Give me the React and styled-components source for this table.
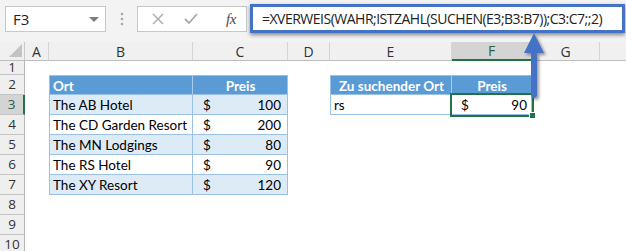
import React from 'react';
import styled, { createGlobalStyle, css } from 'styled-components';

const GlobalStyle = createGlobalStyle`
  html, body { margin: 0; padding: 0; background: #fff; overflow: hidden; }
  #root { width: 626px; height: 251px; }
`;

const BLUE_HEAD = '#5b9bd5';
const BLUE_BAND = '#ddebf7';
const BLUE_LINE = '#9bc2e6';
const GREEN = '#217346';

const Window = styled.div`
  position: relative;
  width: 626px;
  height: 251px;
  overflow: hidden;
  background: #fff;
`;

/* ---------- formula bar ---------- */
const FormulaBar = styled.div`
  display: flex;
  align-items: flex-start;
  height: 42px;
  box-sizing: border-box;
  padding: 6px 0 0 5px;
  background: #f3f3f3;
`;

const NameBox = styled.div`
  box-sizing: border-box;
  width: 101px;
  height: 26px;
  background: #fff;
  border: 1px solid #c8c8c8;
  display: flex;
  align-items: center;
  justify-content: space-between;
  padding: 0 6px 0 7px;
  font: 15px "Open Sans", "Liberation Sans", sans-serif;
  color: #222;
`;

const Caret = styled.span`
  width: 0;
  height: 0;
  border-left: 5px solid transparent;
  border-right: 5px solid transparent;
  border-top: 5px solid #7d7d7d;
`;

const Grip = styled.div`
  width: 31px;
  height: 26px;
  display: flex;
  align-items: center;
  justify-content: center;
`;

const FnBox = styled.div`
  box-sizing: border-box;
  width: 110px;
  height: 26px;
  background: #fff;
  border: 1px solid #c8c8c8;
  display: flex;
  align-items: center;
  padding-left: 14px;
  gap: 20px;
`;

const FxLabel = styled.span`
  font: italic 15px "Liberation Serif", serif;
  color: #4a4a4a;
  margin-left: 8px;
  letter-spacing: -0.5px;
`;

const FormulaInput = styled.div`
  box-sizing: border-box;
  margin: -2px 0 0 3px;
  width: 375px;
  height: 29px;
  background: #fff;
  border: 3px solid #4472c4;
  box-shadow: 0 2px 4px rgba(0, 0, 0, 0.45);
  display: flex;
  align-items: center;
  padding-left: 9px;
  font: 14px "Open Sans", "Liberation Sans", sans-serif;
  letter-spacing: -0.5px;
  color: #222;
  white-space: nowrap;
  overflow: hidden;
`;

/* ---------- sheet grid ---------- */
const Sheet = styled.div`
  display: grid;
  grid-template-columns: 25px 24px 144px 95px 42px 122px 80px 68px 80px;
  grid-template-rows: 19px 14px repeat(9, 20px);
  width: 680px;
  font-family: "Lato", "Open Sans", sans-serif;
`;

const Corner = styled.div`
  background: #f0f0f0;
  border-right: 1px solid #c8c8c8;
  border-bottom: 1px solid #bdbdbd;
  display: flex;
  align-items: flex-end;
  justify-content: flex-end;
  padding: 0 2px 3px 0;
  box-sizing: border-box;
  &::after {
    content: '';
    width: 0;
    height: 0;
    border-left: 13px solid transparent;
    border-bottom: 13px solid #c3c3c3;
  }
`;

const ColHead = styled.div`
  box-sizing: border-box;
  background: ${(p) => (p.$selected ? '#d4d4d4' : '#f0f0f0')};
  border-right: 1px solid #d4d4d4;
  border-bottom: ${(p) => (p.$selected ? `2px solid ${GREEN}` : '1px solid #bdbdbd')};
  display: flex;
  align-items: center;
  justify-content: center;
  font: 14px "Open Sans", "Liberation Sans", sans-serif;
  color: ${(p) => (p.$selected ? '#2e5e3e' : '#333')};
`;

const RowHead = styled.div`
  box-sizing: border-box;
  background: ${(p) => (p.$selected ? '#d4d4d4' : '#efefef')};
  border-right: ${(p) => (p.$selected ? `2px solid ${GREEN}` : '1px solid #b8b8b8')};
  border-bottom: 1px solid #c4c4c4;
  display: flex;
  align-items: center;
  justify-content: center;
  font: 13.5px/1 "Open Sans", "Liberation Sans", sans-serif;
  color: ${(p) => (p.$selected ? '#2e5e3e' : '#333')};
  overflow: hidden;
`;

const Blank = styled.div`
  background: #fff;
`;

const variants = {
  head: css`
    background: ${BLUE_HEAD};
    color: #fff;
    font-weight: 700;
  `,
  band: css`
    background: ${BLUE_BAND};
    color: #000;
  `,
  plain: css`
    background: #fff;
    color: #000;
  `,
};

const TCell = styled.div`
  position: relative;
  box-sizing: border-box;
  display: flex;
  align-items: center;
  justify-content: ${(p) => (p.$align === 'center' ? 'center' : p.$align === 'split' ? 'space-between' : 'flex-start')};
  padding: ${(p) => (p.$align === 'split' ? '1px 6px 0 10px' : '1px 2px 0 3px')};
  font-size: 13.5px;
  white-space: nowrap;
  ${(p) => variants[p.$variant]}
  border-right: 1px solid ${(p) => (p.$variant === 'head' && !p.$last ? '#a9cbec' : BLUE_LINE)};
  border-bottom: 1px solid ${BLUE_LINE};
  ${(p) => p.$first && css`border-left: 1px solid ${BLUE_LINE};`}
  ${(p) => p.$top && css`border-top: 1px solid ${BLUE_LINE};`}
  ${(p) =>
    p.$active &&
    css`
      padding: 1px 4px 0 9px;
      outline: 2px solid ${GREEN};
      outline-offset: 0;
      z-index: 1;
      &::after {
        content: '';
        position: absolute;
        right: -5px;
        bottom: -5px;
        width: 5px;
        height: 5px;
        background: ${GREEN};
        border: 1px solid #fff;
      }
    `}
`;

const Arrow = styled.svg`
  position: absolute;
  left: 518px;
  top: 28px;
  overflow: visible;
  z-index: 5;
`;

/* the last column runs off the right edge, so its letter stays out of view */
const columns = ['A', 'B', 'C', 'D', 'E', 'F', 'G', 'H'];
const visibleLabel = (col) => (col === 'H' ? '' : col);

const hotels = [
  ['The AB Hotel', 100],
  ['The CD Garden Resort', 200],
  ['The MN Lodgings', 80],
  ['The RS Hotel', 90],
  ['The XY Resort', 120],
];

function Price({ value }) {
  return (
    <>
      <span>$</span>
      <span>{value}</span>
    </>
  );
}

function buildRow(n) {
  const cells = [];
  for (let c = 0; c < columns.length; c++) {
    const col = columns[c];
    const key = `${col}${n}`;
    let cell = null;

    if (n === 2 && col === 'B') cell = <TCell key={key} $variant="head" $first $top>Ort</TCell>;
    if (n === 2 && col === 'C') cell = <TCell key={key} $variant="head" $top $last $align="center">Preis</TCell>;
    if (n === 2 && col === 'E') cell = <TCell key={key} $variant="head" $first $top $align="center">Zu suchender Ort</TCell>;
    if (n === 2 && col === 'F') cell = <TCell key={key} $variant="head" $top $last $align="center">Preis</TCell>;

    if (n >= 3 && n <= 7 && (col === 'B' || col === 'C')) {
      const [name, price] = hotels[n - 3];
      const variant = n % 2 === 1 ? 'band' : 'plain';
      cell =
        col === 'B' ? (
          <TCell key={key} $variant={variant} $first>{name}</TCell>
        ) : (
          <TCell key={key} $variant={variant} $align="split"><Price value={price} /></TCell>
        );
    }

    if (n === 3 && col === 'E') cell = <TCell key={key} $variant="plain" $first>rs</TCell>;
    if (n === 3 && col === 'F')
      cell = (
        <TCell key={key} $variant="plain" $align="split" $active>
          <Price value={90} />
        </TCell>
      );

    cells.push(cell || <Blank key={key} />);
  }
  return cells;
}

export default function App() {
  const rows = [1, 2, 3, 4, 5, 6, 7, 8, 9, 10];
  return (
    <>
      <GlobalStyle />
      <Window>
        <FormulaBar>
          <NameBox>
            F3
            <Caret />
          </NameBox>
          <Grip>
            <svg width="4" height="14" viewBox="0 0 4 14">
              <circle cx="2" cy="2" r="1.3" fill="#a8a8a8" />
              <circle cx="2" cy="7" r="1.3" fill="#a8a8a8" />
              <circle cx="2" cy="12" r="1.3" fill="#a8a8a8" />
            </svg>
          </Grip>
          <FnBox>
            <svg width="12" height="12" viewBox="0 0 12 12">
              <path d="M1 1 L11 11 M11 1 L1 11" stroke="#a9a9a9" strokeWidth="1.4" fill="none" />
            </svg>
            <svg width="14" height="12" viewBox="0 0 14 12">
              <path d="M1 6 L5 10 L13 1" stroke="#a9a9a9" strokeWidth="1.8" fill="none" />
            </svg>
            <FxLabel>fx</FxLabel>
          </FnBox>
          <FormulaInput>=XVERWEIS(WAHR;ISTZAHL(SUCHEN(E3;B3:B7));C3:C7;;2)</FormulaInput>
        </FormulaBar>

        <Sheet>
          <Corner />
          {columns.map((col) => (
            <ColHead key={col} $selected={col === 'F'}>{visibleLabel(col)}</ColHead>
          ))}
          {rows.map((n) => (
            <React.Fragment key={n}>
              <RowHead $selected={n === 3}>{n}</RowHead>
              {buildRow(n)}
            </React.Fragment>
          ))}
        </Sheet>

        <Arrow width="34" height="76" viewBox="0 0 34 76">
          <defs>
            <filter id="arrowShade" x="-50%" y="-20%" width="200%" height="150%">
              <feDropShadow dx="2" dy="2" stdDeviation="1.6" floodColor="#000" floodOpacity="0.4" />
            </filter>
          </defs>
          <g filter="url(#arrowShade)" fill="#4472c4">
            <polygon points="16,5 26,25 6,25" />
            <rect x="13" y="22" width="6" height="48" rx="3" />
          </g>
        </Arrow>
      </Window>
    </>
  );
}
